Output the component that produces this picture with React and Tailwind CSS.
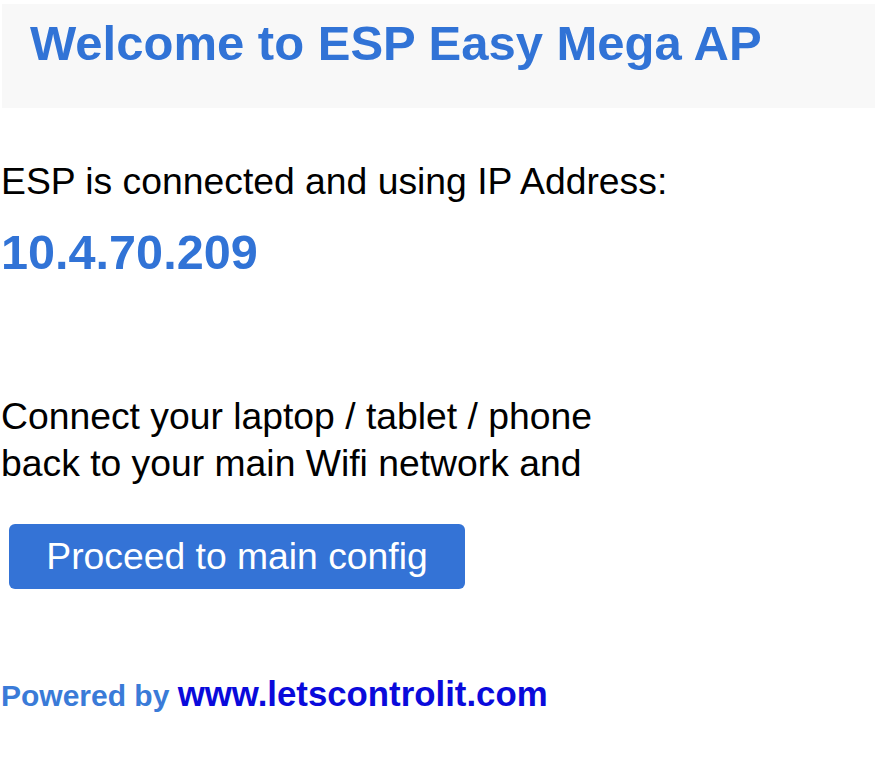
import React from "react";

const App = () => {
  return (
    <div className="min-h-[768px] bg-white font-['Liberation_Sans',Arial,sans-serif] text-black">
      <header className="mt-[4px] ml-[2px] h-[104px] bg-[#f8f8f8] pl-[28px] pt-[11px]">
        <h1 className="text-[49px] leading-[56px] font-bold text-[#3173d6]">
          Welcome to ESP Easy Mega AP
        </h1>
      </header>

      <main className="pl-[1px]">
        <p className="mt-[50px] text-[37.3px] leading-[47px]">
          ESP is connected and using IP Address:
        </p>
        <p className="mt-[20px] text-[48.6px] leading-[55px] font-bold text-[#3173d6]">
          10.4.70.209
        </p>

        <p className="mt-[113px] text-[37.3px] leading-[47px]">
          Connect your laptop / tablet / phone
          <br />
          back to your main Wifi network and
        </p>

        <button className="mt-[37px] ml-[8px] flex h-[65px] w-[456px] items-center justify-center rounded-[6px] bg-[#3473d6] text-[37.3px] text-white">
          Proceed to main config
        </button>

        <div className="mt-[85px] flex items-baseline leading-[39px] font-bold">
          <span className="text-[30px] text-[#3a7bd8]">Powered by&nbsp;</span>
          <a href="#" className="text-[34.8px] text-[#0a0adb]">
            www.letscontrolit.com
          </a>
        </div>
      </main>
    </div>
  );
};

export default App;
